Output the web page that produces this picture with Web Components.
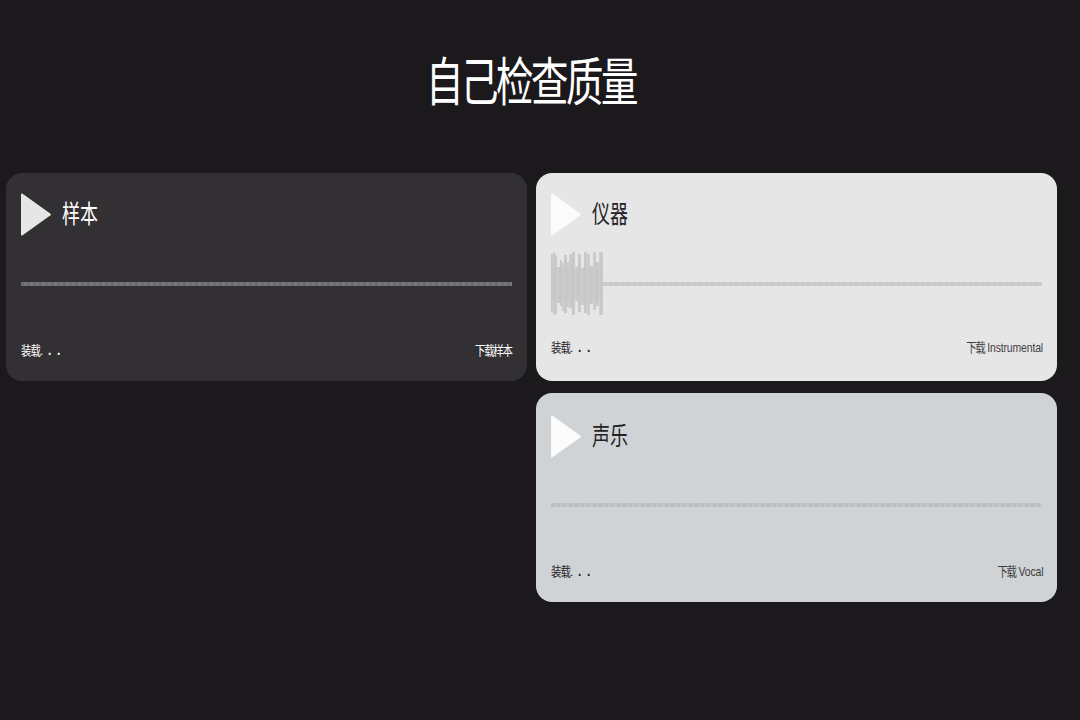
<!DOCTYPE html>
<html lang="zh">
<head>
<meta charset="utf-8">
<title>自己检查质量</title>
<style>
html,body{margin:0;padding:0;background:#1b191c;}
body{font-family:"Liberation Sans","Noto Sans CJK SC",sans-serif;height:720px;overflow:hidden;}
</style>
</head>
<body>
<qc-page>
  <qc-player slot="left" theme="dark" name="样本" cjk="下载样本"></qc-player>
  <qc-player slot="right" theme="light" name="仪器" cjk="下载" latin="Instrumental" wave="1"></qc-player>
  <qc-player slot="right" theme="grey" name="声乐" cjk="下载" latin="Vocal" low="1"></qc-player>
</qc-page>
<script>
class QcPage extends HTMLElement{
  constructor(){
    super();
    this.attachShadow({mode:"open"}).innerHTML=`
    <style>
      :host{display:block;padding:0 23px 0 6px;color:#fff;}
      .top{display:flex;justify-content:center;height:173px;padding-top:54px;box-sizing:border-box;}
      h1{margin:0;height:58px;line-height:58px;font-size:52px;font-weight:400;letter-spacing:-3.4px;transform:scaleX(.72) translateX(-1px);transform-origin:center;white-space:nowrap;}
      .grid{display:grid;grid-template-columns:521px 521px;column-gap:9px;align-items:start;}
      .col{display:flex;flex-direction:column;gap:12px;}
    </style>
    <div class="top"><h1>自己检查质量</h1></div>
    <div class="grid">
      <div class="col"><slot name="left"></slot></div>
      <div class="col"><slot name="right"></slot></div>
    </div>`;
  }
}
const T={
  dark:{bg:"#323033",fg:"#ffffff",line:"#6b6a6c",line2:"#777678",play:"#e6e6e6"},
  light:{bg:"#e6e6e6",fg:"#222224",line:"#c8c8c8",line2:"#cdcdcd",play:"#fbfbfb"},
  grey:{bg:"#d0d3d6",fg:"#222224",line:"#bcbec1",line2:"#c3c5c8",play:"#fbfbfb"}
};
const prof=[[0,2,2,3],[2,2,0,0],[4,2,3,1],[6,3,15,12],[9,2,8,9],[11,2,11,4],[13,3,3,2],[16,2,10,8],[18,3,2,7],[21,3,0,0],[24,3,15,14],[27,3,2,3],[30,3,16,10],[33,3,0,2],[36,3,2,0],[39,3,14,11],[42,3,0,5],[45,3,10,9],[48,4,0,0]];
class QcPlayer extends HTMLElement{
  constructor(){
    super();
    const t=T[this.getAttribute("theme")];
    const wave=this.hasAttribute("wave"), low=this.hasAttribute("low");
    const latin=this.getAttribute("latin");
    let bars=`<rect x="0" y="16" width="52" height="32" fill="#c8c8c8"/>`;
    if(wave){
      prof.forEach(([x,w,a,b])=>{ bars+=`<rect x="${x}" y="${a}" width="${w-.15}" height="${63-a-b}"/>`; });
      for(let x=6;x<52;x+=6) bars+=`<rect x="${x}" y="0" width="1" height="63" fill="#e6e6e6" opacity=".3"/>`;
    }
    this.attachShadow({mode:"open"}).innerHTML=`
    <style>
      :host{display:block;box-sizing:border-box;height:${low?209:208}px;border-radius:16px;padding:${low?22:20}px 15px 0;background:${t.bg};color:${t.fg};}
      .head{display:flex;align-items:center;gap:11px;height:43px;}
      svg.play{display:block;width:30px;height:43px;flex:none;}
      .name{display:inline-block;font-size:25px;line-height:43px;transform:scaleX(.72);transform-origin:left center;}
      .track{height:63px;margin-top:${low?15:16}px;display:flex;align-items:center;}
      .line{flex:1;height:4px;background:repeating-linear-gradient(90deg,${t.line} 0 3px,${t.line2} 3px 6px);}
      svg.wave{display:block;width:52px;height:63px;flex:none;fill:#c8c8c8;}
      .foot{display:flex;justify-content:space-between;align-items:center;font-size:13px;height:18px;margin-top:${wave?22:25}px;}
      .l,.r{display:inline-block;white-space:nowrap;}
      .l{transform:scaleX(.8);transform-origin:left center;letter-spacing:-1px;word-spacing:5px;}
      .d{font-weight:700;font-size:15px;letter-spacing:0;word-spacing:3px;}
      .r{transform:scaleX(.8);transform-origin:right center;letter-spacing:-.15px;opacity:${low||wave?.85:1};margin-right:${latin?-1:0}px;}
      .c{letter-spacing:-1.6px;}
    </style>
    <div class="head">
      <svg class="play" viewBox="0 0 30 43"><path d="M1.6 .8 L29.2 20.4 Q30.6 21.5 29.2 22.6 L1.6 42.2 Q0 43 0 41.4 L0 1.6 Q0 0 1.6 .8Z" fill="${t.play}"/></svg>
      <span class="name">${this.getAttribute("name")}</span>
    </div>
    <div class="track">
      ${wave?`<svg class="wave" viewBox="0 0 52 63">${bars}</svg>`:""}
      <div class="line"></div>
    </div>
    <div class="foot"><span class="l">装载.<span class="d"> . .</span></span><span class="r"><span class="c">${this.getAttribute("cjk")}</span>${latin?" "+latin:""}</span></div>`;
  }
}
customElements.define("qc-page",QcPage);
customElements.define("qc-player",QcPlayer);
</script>
</body>
</html>
